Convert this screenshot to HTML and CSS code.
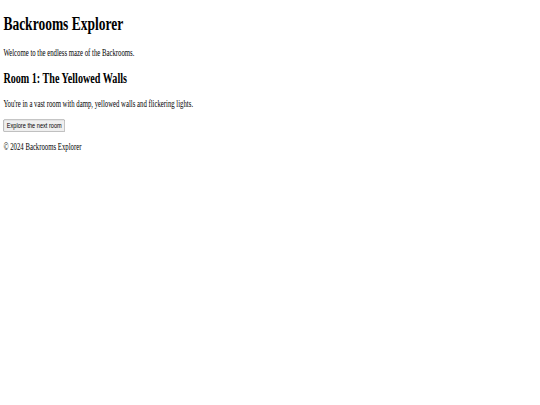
FILE: index.html
```html
<!DOCTYPE html>
<html lang="en">
<head>
<meta charset="utf-8">
<title>Backrooms Explorer</title>
<link rel="stylesheet" href="styles.css">
</head>
<body>
<div class="viewport">
  <div class="page">
    <header>
      <h1 class="title">Backrooms Explorer</h1>
      <p class="text">Welcome to the endless maze of the Backrooms.</p>
    </header>
    <main>
      <h2 class="room-title">Room 1: The Yellowed Walls</h2>
      <p class="text">You're in a vast room with damp, yellowed walls and flickering lights.</p>
      <button class="btn" type="button">Explore the next room</button>
    </main>
    <footer>
      <p class="text">&copy; 2024 Backrooms Explorer</p>
    </footer>
  </div>
</div>
</body>
</html>
```
FILE: styles.css
```css
html, body {
  margin: 0;
  padding: 0;
  background: #ffffff;
  overflow: hidden;
  width: 540px;
  height: 405px;
}
.viewport {
  display: flow-root;
  width: 1280px;
  transform: scale(0.421875, 0.6);
  transform-origin: 0 0;
  font-family: "Liberation Serif", "Times New Roman", serif;
  font-size: 16px;
  color: #000;
}
.page {
  margin: 8px;
}
.title {
  font-size: 32px;
  font-weight: bold;
  margin: 21.44px 0;
}
.room-title {
  font-size: 24px;
  font-weight: bold;
  margin: 19.92px 0;
}
.text {
  margin: 16px 0;
}
.btn {
  font-family: "Liberation Sans", Arial, sans-serif;
  font-size: 13.333px;
}
```
